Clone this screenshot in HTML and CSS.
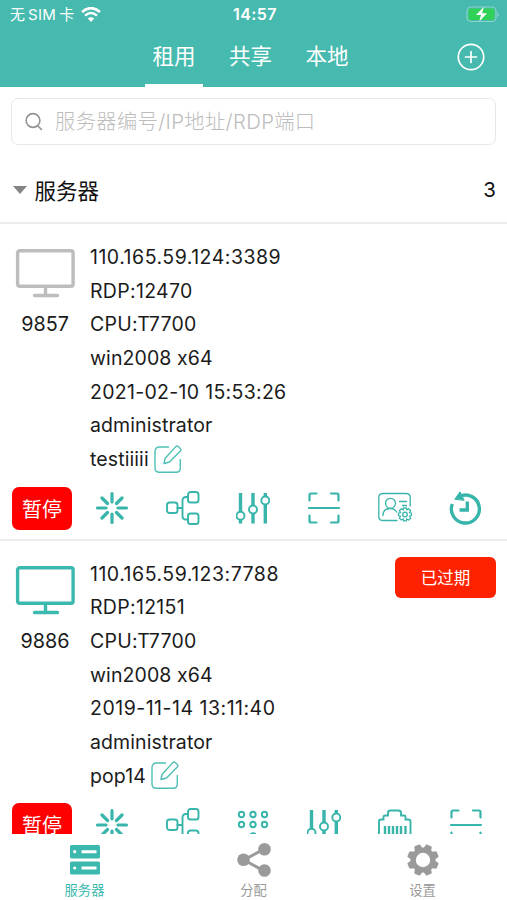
FILE: index.html
```html
<!DOCTYPE html>
<html lang="zh-CN">
<head>
<meta charset="utf-8">
<meta name="viewport" content="width=device-width">
<title>服务器</title>
<link rel="stylesheet" href="styles.css">
</head>
<body>
<svg class="defs" aria-hidden="true">
  <symbol id="monitor" viewBox="0 0 60 50"><rect x="2.6" y="1.8" width="55.5" height="35.500" rx="2" fill="none" stroke="currentColor" stroke-width="3.4"/><path d="M30.500 38v8M19.500 46.500h23" fill="none" stroke="currentColor" stroke-width="3.4" stroke-linecap="round"/></symbol>
  <symbol id="edit" viewBox="0 0 28 28"><path d="M15 2H5.500Q1 2 1 6.500V23Q1 27.300 5.500 27.300H22Q26.300 27.300 26.300 23V14M10 18.500L11 13.500L21.800 1.600Q23 .5 24.500 1.800L26.300 3.400Q27.500 4.700 26.300 6L15.500 17Z"/></symbol>
  <symbol id="burst" viewBox="0 0 34 34"><path d="M17 2.500v8.500M17 23v8.500M2.500 17h8.500M23 17h8.500M7 7l5.500 5.500M21.500 21.500L27 27M7 27l5.500-5.500M21.500 12.500L27 7" stroke-width="3.200"/></symbol>
  <symbol id="nodes" viewBox="0 0 34 34"><rect x="1" y="11.500" width="10.500" height="10.500" rx="2.600"/><rect x="22" y="1" width="10.500" height="10.500" rx="2.600"/><rect x="22" y="22.500" width="10.500" height="10.500" rx="2.600"/><path d="M11.500 17h5M22 6h-2q-3.500 0-3.500 3.500V25q0 3.500 3.500 3.500h2"/></symbol>
  <symbol id="sliders" viewBox="0 0 34 34"><path d="M4.500 2v18M4.500 28v4.500M17 2v13M17 23v9.500M29.300 2v4M29.300 14v18.500" stroke-width="3.400" stroke-linecap="butt"/><circle cx="4.500" cy="24.800" r="4"/><circle cx="17" cy="18.500" r="4"/><circle cx="29.300" cy="9.500" r="4"/></symbol>
  <symbol id="scan" viewBox="0 0 34 34"><path d="M2.500 9.500V4Q2.500 2.500 4 2.500h5.500M24 2.500h6Q31.500 2.500 31.500 4v5.500M2 17h30M2.500 24.500V30q0 1.500 1.500 1.500h5.500M24 31.500h6q1.500 0 1.500-1.500v-5.500" stroke-width="2.200"/></symbol>
  <symbol id="profile" viewBox="0 0 34 34"><g stroke-width="1.300"><path d="M19 29.500H5Q.8 29.500.8 25.500V6.500Q.8 2.500 5 2.500H28Q32.200 2.500 32.200 6.500V15M5 24.500Q5 17.500 12.300 17.500Q16.500 17.500 18.700 21M21.500 10.500h7M24.500 14.500h4"/><circle cx="12.500" cy="12.300" r="5"/><circle cx="27" cy="23.500" r="2.300"/><path d="M25.700 16.800h2.600l.5 1.900 1.900-1 1.900 1.900-1 1.900 1.900.5v2.600l-1.900.6 1 1.900-1.900 1.900-1.900-1-.5 1.900h-2.600l-.5-1.900-1.900 1-1.900-1.900 1-1.900-1.900-.6V22l1.900-.5-1-1.900 1.900-1.900 1.900 1z"/></g></symbol>
  <symbol id="history" viewBox="0 0 34 34"><path d="M3.300 13A14 14 0 1 0 10.500 5.300M18.300 10.500V19H10.500" stroke-width="3.400" stroke-linecap="butt"/><path d="M6 8L11 .8L15 9Z" fill="currentColor" stroke-width="1"/></symbol>
  <symbol id="dots" viewBox="0 0 34 34"><g id="dotrow"><circle cx="5.500" cy="6.500" r="2.700"/><circle cx="17" cy="6.500" r="2.700"/><circle cx="28.500" cy="6.500" r="2.700"/></g><use href="#dotrow" y="10"/><circle cx="17" cy="27.800" r="2.700"/></symbol>
  <symbol id="port" viewBox="0 0 34 34"><path d="M1 32V13.500Q1 11.500 3 11.500H5.500V9Q5.500 7.500 7 7.500H10V5Q10 2.500 12.500 2.500H20.500Q23 2.500 23 5V7.500H26Q27.500 7.500 27.500 9V11.500H30Q32.500 11.500 32.500 13.500V32"/><path d="M7 18v13M11 18v13M15 18v13M19 18v13M23 18v13M27.500 18v13" stroke-width="2.400" stroke-linecap="butt"/></symbol>
</svg>
<div class="app">
  <header class="header">
    <div class="status">
      <div class="carrier"><span>无<span class="sim">SIM</span>卡</span><svg width="20" height="15" viewBox="0 0 20 15"><path d="M10 15L6.700 11.600Q10 9 13.300 11.600Z" fill="#fff"/><path d="M1 5Q10-2.800 19 5M4 8.600Q10 3.300 16 8.600" fill="none" stroke="#fff" stroke-width="2.500"/></svg></div>
      <div class="time">14:57</div>
      <svg class="battery" width="34" height="17" viewBox="0 0 34 17"><rect x="1" y="1" width="29" height="14.500" rx="4" fill="none" stroke="#8bd2ca" stroke-width="1.200"/><rect x="2.500" y="2.500" width="26" height="11.500" rx="2.300" fill="#31d158"/><path d="M31.500 6v5q1.500-1 1.500-2.500T31.500 6" fill="#8bd2ca"/><path d="M18 .7L10 9h5l-1.700 6.500L21 7.300h-5Z" fill="#fff"/></svg>
    </div>
    <nav class="tabs"><span class="tab active">租用</span><span class="tab">共享</span><span class="tab">本地</span>
      <svg class="add" width="28" height="28" viewBox="0 0 28 28"><circle cx="14" cy="14" r="12.700"/><path d="M8.500 14h11M14 8.500v11"/></svg>
    </nav>
  </header>
  <main class="content">
    <div class="search"><svg width="20" height="20" viewBox="0 0 20 20"><circle cx="9" cy="8.500" r="6.900"/><path d="M13.500 13.500L17.500 17.500"/></svg><span>服务器编号/IP地址/RDP端口</span></div>
    <div class="group"><i class="caret"></i><span class="group-name">服务器</span><span class="count">3</span></div>
    <article class="card">
      <div class="info">
        <div class="device off"><svg width="60" height="50"><use href="#monitor"/></svg><span>9857</span></div>
        <ul class="lines"><li class="ip">110.165.59.124:3389</li><li>RDP:12470</li><li>CPU:T7700</li><li class="word">win2008 x64</li><li>2021-02-10 15:53:26</li><li class="word">administrator</li><li class="note">testiiiii<svg class="line-icon"><use href="#edit"/></svg></li></ul>
      </div>
      <div class="actions"><button class="pause">暂停</button><svg><use href="#burst"/></svg><svg><use href="#nodes"/></svg><svg><use href="#sliders"/></svg><svg><use href="#scan"/></svg><svg><use href="#profile"/></svg><svg><use href="#history"/></svg></div>
    </article>
    <article class="card">
      <div class="info">
        <div class="device"><svg width="60" height="50"><use href="#monitor"/></svg><span>9886</span></div>
        <ul class="lines"><li class="ip">110.165.59.123:7788</li><li>RDP:12151</li><li>CPU:T7700</li><li class="word">win2008 x64</li><li class="ip">2019-11-14 13:11:40</li><li class="word">administrator</li><li class="note">pop14<svg class="line-icon"><use href="#edit"/></svg></li></ul>
        <button class="expired">已过期</button>
      </div>
      <div class="actions"><button class="pause">暂停</button><svg><use href="#burst"/></svg><svg><use href="#nodes"/></svg><svg><use href="#dots"/></svg><svg><use href="#sliders"/></svg><svg><use href="#port"/></svg><svg><use href="#scan"/></svg></div>
    </article>
  </main>
  <nav class="bottom">
    <div class="item current"><svg viewBox="0 0 36 34"><rect x="3" y="2" width="30" height="13.500" rx="1.500"/><rect x="3" y="18.500" width="30" height="13" rx="1.500"/><path d="M14.500 8.700h15M14.500 25h15" stroke="#fff" stroke-width="3"/><circle cx="7.700" cy="8.700" r="1.600" fill="#fff"/><circle cx="7.700" cy="25" r="1.600" fill="#fff"/></svg><span>服务器</span></div>
    <div class="item"><svg viewBox="0 0 36 34"><path d="M28 6L8 17L28 28" fill="none" stroke="currentColor" stroke-width="3"/><circle cx="7.500" cy="16.800" r="6.300"/><circle cx="28.500" cy="6.300" r="6.300"/><circle cx="28.500" cy="27.500" r="6.300"/></svg><span>分配</span></div>
    <div class="item"><svg viewBox="0 0 36 34"><circle cx="18" cy="17" r="9.900" fill="none" stroke="currentColor" stroke-width="5.400"/><g id="teeth"><path id="tooth" d="M14 6L14.700 2Q15 1.200 15.800 1.200H20.200Q21 1.200 21.300 2L22 6Z" transform="rotate(22.500 18 17)"/><use href="#tooth" transform="rotate(45 18 17)"/><use href="#tooth" transform="rotate(90 18 17)"/><use href="#tooth" transform="rotate(135 18 17)"/></g><use href="#teeth" transform="rotate(180 18 17)"/></svg><span>设置</span></div>
  </nav>
</div>
</body>
</html>
```

FILE: styles.css
```css
* { box-sizing: border-box; }
body { margin: 0; font-family: Inter, "Noto Sans CJK SC", sans-serif; font-feature-settings: "calt" 0; color: #1b1b1b; background: #fff; }
.defs { display: block; width: 0; height: 0; }
.app { display: flex; flex-direction: column; height: 900px; overflow: hidden; }
.header { height: 87px; flex: none; background: #46baae; color: #fff; }
.status { display: grid; grid-template-columns: 1fr auto 1fr; align-items: center; height: 29px; padding: 0 7px 0 10px; }
.carrier { display: flex; align-items: center; gap: 7px; font-size: 15px; line-height: 29px; }
.sim { margin: 0 3px; letter-spacing: .3px; }
.time { font-size: 16px; font-weight: 600; letter-spacing: .4px; line-height: 29px; }
.battery { justify-self: end; }
.tabs { display: flex; height: 58px; padding: 0 22px 0 145px; }
.tab { width: 58px; margin-right: 18.500px; padding-top: 11px; font-size: 21.500px; line-height: 32px; text-align: center; white-space: nowrap; }
.tab.active { border-bottom: 3px solid #fff; }
.add { margin: 14px 0 0 auto; fill: none; stroke: #fff; stroke-width: 1.700; stroke-linecap: round; }
.content { flex: 1; min-height: 0; overflow: hidden; }
.search { display: flex; align-items: center; height: 47px; margin: 11px 11px 0; padding: 0 0 0 12px; gap: 11px; border: 1.500px solid #e8e8e8; border-radius: 7px; color: #bdbdbd; font-size: 20.300px; letter-spacing: .35px; font-weight: 300; line-height: 30px; white-space: nowrap; }
.search span { padding-top: 1px; }
.search svg { fill: none; stroke: #929292; stroke-width: 1.600; stroke-linecap: round; }
.group { display: flex; align-items: center; height: 79px; padding: 12px 11px 0 13px; border-bottom: 2px solid #ececec; color: #111; font-size: 21.500px; }
.caret { border: 7px solid transparent; border-top: 8px solid #858585; border-bottom: 0; margin-right: 7.500px; }
.count { margin-left: auto; font-size: 20.500px; }
.card { height: 316.500px; border-bottom: 2px solid #ececec; }
.info { display: flex; height: 255px; padding: 17px 11px 0 15px; }
.device { display: flex; flex-direction: column; align-items: center; width: 60px; padding-top: 8px; color: #3cb9ae; font-size: 19.800px; }
.device.off { color: #bdbdbd; }
.device span { margin-top: 13px; line-height: 24px; color: #1b1b1b; }
.lines { list-style: none; margin: 0 0 0 15px; padding: 0; font-size: 19.500px; line-height: 33.700px; letter-spacing: .3px; white-space: nowrap; }
.lines li { height: 33.700px; }
.lines .ip { letter-spacing: .5px; }
.lines .word { letter-spacing: .1px; }
.lines .note { display: flex; align-items: center; letter-spacing: .1px; }
.line-icon { width: 28px; height: 28px; margin-left: 5px; margin-bottom: 2px; fill: none; stroke: #4dbfb4; stroke-width: 1.400; stroke-linejoin: round; }
button { border: 0; padding: 0; background: red; color: #fff; font: 20px Inter, "Noto Sans CJK SC", sans-serif; }
.pause { flex: none; width: 60px; height: 43px; border-radius: 7px; margin-right: 22.800px; }
.expired { width: 101px; height: 41px; margin: -1px 0 0 auto; border-radius: 6px; background: #ff2200; font-size: 16.500px; }
.actions { display: flex; align-items: center; height: 58px; padding-left: 12px; color: #38b5aa; }
.actions svg { width: 34px; height: 34px; margin-right: 36.800px; flex: none; fill: none; stroke: currentColor; stroke-width: 1.900; stroke-linecap: round; }
.bottom { display: grid; grid-template-columns: repeat(3, 1fr); flex: none; height: 66px; padding-top: 9px; background: #fff; }
.item { display: flex; flex-direction: column; align-items: center; gap: 4px; color: #9a9a9a; fill: currentColor; font-size: 13.300px; line-height: 18px; }
.item svg { width: 36px; height: 34px; }
.item.current { color: #3cb9ae; }
```
